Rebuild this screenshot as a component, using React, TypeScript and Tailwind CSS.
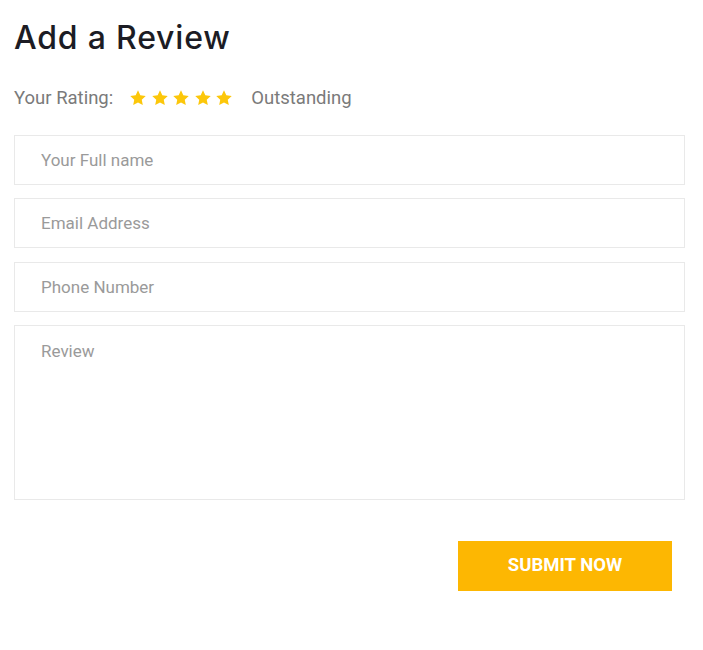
import { useState } from 'react';

const fields = ['Your Full name', 'Email Address', 'Phone Number'];

function Star() {
  return (
    <svg viewBox="0 0 24 24" className="h-[18px] w-[18px] fill-[#fcc70a]">
      <path d="M12 1.8l3.1 6.6 7.2.9-5.3 5 1.4 7.1L12 17.9l-6.4 3.5 1.4-7.1-5.3-5 7.2-.9z" />
    </svg>
  );
}

export default function App() {
  const [rating] = useState(5);

  return (
    <div className="min-h-[650px] w-[703px] bg-white font-['Roboto',sans-serif]">
      <div className="pl-[14px] pr-[18px] pt-[18px]">
        {/* Heading */}
        <h2 className="font-['Inter',sans-serif] text-[32px] font-medium leading-[40px] tracking-[0.8px] text-[#1c1c24]">
          Add a Review
        </h2>

        {/* Rating */}
        <div className="mt-[28px] flex items-center text-[18.5px] leading-[24px] text-[#7a7a7a]">
          <span>Your Rating:</span>
          <div className="ml-[16px] flex items-center gap-[3.5px]">
            {Array.from({ length: rating }).map((_, i) => (
              <Star key={i} />
            ))}
          </div>
          <span className="ml-[18px]">Outstanding</span>
        </div>

        {/* Form */}
        <form className="mt-[25px] flex flex-col gap-[13.4px]">
          {fields.map((f) => (
            <input
              key={f}
              type="text"
              placeholder={f}
              className="h-[50px] w-full border border-[#e9e9e9] px-[26px] text-[17px] text-[#555] outline-none placeholder:text-[#9a9a9a]"
            />
          ))}
          <textarea
            placeholder="Review"
            className="h-[175px] w-full resize-none border border-[#e9e9e9] px-[26px] pt-[13px] text-[17px] text-[#555] outline-none placeholder:text-[#9a9a9a]"
          />
          <div className="mt-[27px] flex justify-end pr-[13px]">
            <button
              type="button"
              className="h-[50px] w-[214px] bg-[#fdb702] text-[18.5px] font-bold uppercase text-white"
            >
              Submit Now
            </button>
          </div>
        </form>
      </div>
    </div>
  );
}
